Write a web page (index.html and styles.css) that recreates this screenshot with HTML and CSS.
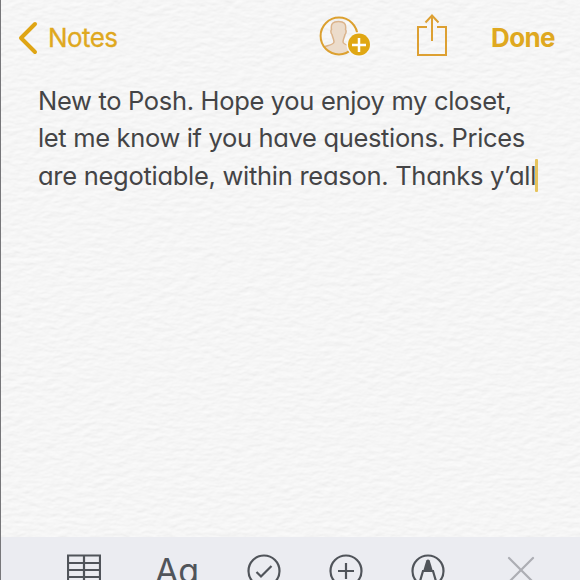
FILE: index.html
```
<!DOCTYPE html>
<html lang="en">
<head>
    <meta charset="UTF-8">
    <meta name="viewport" content="width=device-width, initial-scale=1.0">
    <title>Notes</title>
    <link rel="stylesheet" href="styles.css">
</head>
<body>
    <div class="app">
        <svg class="paper" width="580" height="580" aria-hidden="true">
            <filter id="grain" x="0" y="0" width="100%" height="100%" color-interpolation-filters="sRGB">
                <feTurbulence type="fractalNoise" baseFrequency="0.09 0.2" numOctaves="3" seed="4" result="noise"/>
                <feDiffuseLighting in="noise" surfaceScale="0.28" diffuseConstant="1" lighting-color="#fdfdfd">
                    <feDistantLight azimuth="250" elevation="76"/>
                </feDiffuseLighting>
            </filter>
            <rect width="580" height="580" filter="url(#grain)"/>
        </svg>

        <header class="nav">
            <a class="back">
                <svg width="20" height="34" viewBox="0 0 20 34">
                    <path d="M17 3 L3 17 L17 31"/>
                </svg>
                <span>Notes</span>
            </a>
            <div class="nav-actions">
                <svg class="add-person" width="54" height="44" viewBox="0 0 54 44">
                    <defs>
                        <clipPath id="face"><circle cx="21" cy="20" r="18"/></clipPath>
                    </defs>
                    <path class="person" clip-path="url(#face)" d="M3 32.500 C8 29 15.500 29.500 16 26 C16 23.500 14.500 21 14 18.500 C12.800 17.500 12.500 14.500 13.500 13.500 C12.500 7.500 15 5.500 20.500 5.500 C26 5.500 28.500 7.500 27.500 13.500 C28.500 14.500 28.200 17.500 27 18.500 C26.500 21 25 23.500 25 26 C25.500 29.500 33 29 38 32.500 V42 H3 Z"/>
                    <circle class="ring" cx="21" cy="20" r="18.400"/>
                    <circle class="gap" cx="41" cy="28.500" r="12.500"/>
                    <circle class="badge" cx="41" cy="28.500" r="11"/>
                    <path class="plus" d="M34 29 H48 M41 22 V36"/>
                </svg>
                <svg class="share" width="32" height="44" viewBox="0 0 32 44">
                    <path d="M11 14 H2 V42 H30 V14 H21"/>
                    <path d="M16 28 V3 M9.500 9.500 L16 2.500 L22.500 9.500"/>
                </svg>
                <span class="done">Done</span>
            </div>
        </header>

        <main class="note">
            <div class="line line-1">New to Posh. Hope you enjoy my closet,</div>
            <div class="line line-2">let me know if you have questions. Prices</div>
            <div class="line line-3">are negotiable, within reason. Thanks y’all<span class="caret"></span></div>
        </main>

        <footer class="toolbar">
            <svg class="table" width="34" height="36" viewBox="0 0 34 36">
                <path d="M1 1.500 H33 V35 H1 Z M17 1 V35 M1 9 H33 M1 16 H33 M1 23 H33 M1 30 H33"/>
            </svg>
            <span class="format">Aa</span>
            <svg class="check" width="34" height="34" viewBox="0 0 34 34">
                <circle cx="17" cy="17" r="15.500"/>
                <path d="M9.500 18 L14 22.500 L24.500 12"/>
            </svg>
            <svg class="add" width="34" height="34" viewBox="0 0 34 34">
                <circle cx="17" cy="17" r="15.500"/>
                <path d="M9 17 H25 M17 9 V25"/>
            </svg>
            <svg class="markup" width="34" height="34" viewBox="0 0 34 34">
                <circle cx="17" cy="17" r="15.500"/>
                <path d="M8.500 29 L12 17 H22 L25.500 29"/>
                <path class="nib" d="M12 17.500 L15.300 6.500 Q17 4.500 18.700 6.500 L22 17.500 Z"/>
            </svg>
            <svg class="close" width="28" height="28" viewBox="0 0 28 28">
                <path d="M2 2 L26 26 M26 2 L2 26"/>
            </svg>
        </footer>
    </div>
</body>
</html>
```

FILE: styles.css
```
body {
    margin: 0;
    background-color: #f6f6f6;
    font-family: Inter, "Liberation Sans", sans-serif;
    overflow: hidden;
}
svg {
    display: block;
    flex: none;
    fill: none;
}
.app {
    position: relative;
    display: flex;
    flex-direction: column;
    width: 580px;
    height: 580px;
    box-sizing: border-box;
    border-left: 1px solid #77777a;
    overflow: hidden;
}
/* paper grain behind everything */
.paper {
    position: absolute;
    top: 0;
    left: 0;
    z-index: -1;
}
.nav {
    display: flex;
    justify-content: space-between;
    height: 76px;
    padding: 0 25px 0 17px;
    color: #dfa820;
    line-height: 76px;
}
.back {
    display: flex;
    align-items: center;
    gap: 10px;
    font-size: 26px;
    letter-spacing: -0.6px;
    -webkit-text-stroke: 0.3px;
}
.back svg {
    stroke: #dfa514;
    stroke-width: 4;
    stroke-linecap: round;
    stroke-linejoin: round;
}
.nav-actions {
    display: flex;
}
.add-person {
    margin: 16px 43px 0 0;
}
.share {
    margin: 13px 43px 0 0;
    stroke: #dda032;
    stroke-width: 2;
}
.person {
    fill: #ecdccb;
    stroke: #dbb48c;
    stroke-width: 1.5;
}
.ring {
    stroke: #dca02f;
    stroke-width: 2;
}
.gap {
    fill: #f7f7f7;
}
.badge {
    fill: #e0a713;
}
.plus {
    stroke: #fff;
    stroke-width: 2.5;
}
.done {
    font-size: 26px;
    font-weight: 700;
    letter-spacing: -0.6px;
}
.add-person {
    margin-right: 44px;
}
.note {
    flex: 1;
    padding: 5.5px 0 0 37px;
    color: #444446;
    font-size: 25.5px;
    line-height: 37.5px;
    font-feature-settings: "cv11";
}
.line {
    white-space: nowrap;
}
.line-1 {
    letter-spacing: -0.32px;
}
.line-2 {
    letter-spacing: -0.34px;
}
.line-3 {
    letter-spacing: -0.28px;
}
.caret {
    display: inline-block;
    width: 3px;
    height: 33px;
    margin: -5px 0 -5px -1px;
    vertical-align: -2px;
    border-radius: 1px;
    background-color: #e6c35c;
}
.toolbar {
    display: flex;
    align-items: flex-start;
    height: 43px;
    box-sizing: border-box;
    padding: 17px 0 0 66px;
    background-color: #ebecf1;
    color: #50545a;
    overflow: hidden;
}
.toolbar svg {
    stroke: #50545a;
    stroke-width: 2.2;
}
.format {
    width: 45px;
    margin: 0 47px 0 54px;
    font-size: 34px;
    line-height: 34px;
    letter-spacing: -0.3px;
    font-feature-settings: "cv11";
}
.add,
.markup {
    margin-left: 48px;
}
.toolbar .nib {
    fill: #50545a;
    stroke: none;
}
.toolbar .close {
    margin: 2px 0 0 62px;
    stroke: #adaeb4;
    stroke-linecap: round;
}
```
